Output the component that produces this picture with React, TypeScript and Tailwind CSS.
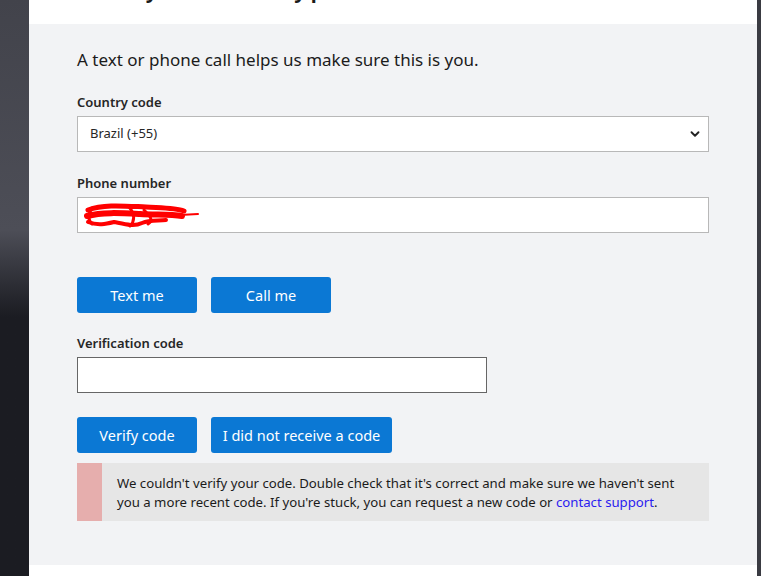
import { ChevronDown } from "lucide-react";

const font = { fontFamily: '"Noto Sans", "Open Sans", sans-serif' };

function Scribble() {
  return (
    <svg width="116" height="26" viewBox="0 0 116 26" className="block">
      <g fill="none" stroke="#ff0000" strokeLinecap="round" strokeLinejoin="round">
        <path d="M4 8 C20 2 40 4 62 5 C78 6 92 6 100 9" strokeWidth="5" />
        <path d="M3 14 C18 10 36 11 56 12 C72 13 86 12 98 14" strokeWidth="6" />
        <path d="M4 20 C14 24 22 22 30 20 C40 22 50 25 58 21 C66 18 74 19 82 18" strokeWidth="4" />
        <path d="M8 6 C4 12 4 18 8 22" strokeWidth="3" />
        <path d="M44 4 C50 10 52 18 46 24" strokeWidth="3" />
        <path d="M96 13 L114 12" strokeWidth="2" />
        <path d="M60 8 C66 14 70 18 64 22" strokeWidth="3" />
      </g>
    </svg>
  );
}

function Label({ children }: { children: React.ReactNode }) {
  return (
    <div className="text-[13px] font-semibold leading-[18px] text-[#262626] mb-[5px]">
      {children}
    </div>
  );
}

function BlueButton({ children, width }: { children: React.ReactNode; width: string }) {
  return (
    <button
      className={`${width} h-[36px] rounded-[3px] bg-[#0b78d4] text-white text-[14.5px] leading-none`}
    >
      {children}
    </button>
  );
}

export default function App() {
  return (
    <div className="flex h-[576px] w-[761px] overflow-hidden bg-[#1c1d23]" style={font}>
      <div className="w-[29px] h-full bg-gradient-to-b from-[#42434b] via-[#4d4e57] via-40% to-[#1b1c22] to-55%" />
      <div className="w-[728px] h-full bg-white flex flex-col">
        <div className="h-[24px] px-[48px] overflow-hidden">
          <h1 className="text-[20px] font-bold leading-[24px] text-[#1b1b1b] -mt-[21px]">
            Identity verification by phone
          </h1>
        </div>
        <div className="h-[541px] bg-[#f2f3f5] px-[48px] pt-[24px]">
          <p className="text-[17px] leading-[24px] text-[#1b1b1b] mb-[21px]">
            A text or phone call helps us make sure this is you.
          </p>

          <Label>Country code</Label>
          <div className="w-[632px] h-[36px] bg-white border border-[#b8b8b8] flex items-center justify-between pl-[12px] pr-[6px]">
            <span className="text-[13px] text-[#262626]">Brazil (+55)</span>
            <ChevronDown size={14} strokeWidth={3.2} className="text-[#222]" />
          </div>

          <div className="mt-[22px]">
            <Label>Phone number</Label>
            <div className="w-[632px] h-[36px] bg-white border border-[#b8b8b8] flex items-center pl-[6px]">
              <Scribble />
            </div>
          </div>

          <div className="flex gap-[14px] mt-[44px]">
            <BlueButton width="w-[120px]">Text me</BlueButton>
            <BlueButton width="w-[120px]">Call me</BlueButton>
          </div>

          <div className="mt-[21px]">
            <Label>Verification code</Label>
            <div className="w-[410px] h-[36px] bg-white border border-[#666666]" />
          </div>

          <div className="flex gap-[14px] mt-[24px]">
            <BlueButton width="w-[120px]">Verify code</BlueButton>
            <BlueButton width="w-[181px]">I did not receive a code</BlueButton>
          </div>

          <div className="mt-[10px] w-[632px] flex bg-[#e6e6e6]">
            <div className="w-[25px] shrink-0 bg-[#e6aead]" />
            <p className="pl-[15px] pr-[20px] pt-[11px] pb-[9px] text-[13.2px] leading-[19px] text-[#1b1b1b]">
              We couldn't verify your code. Double check that it's correct and make sure we haven't sent
              you a more recent code. If you're stuck, you can request a new code or{" "}
              <a className="text-[#2a20f0]">contact support</a>.
            </p>
          </div>
        </div>
        <div className="flex-1 bg-white" />
      </div>
      <div className="flex-1 h-full bg-[#3a3b42]" />
    </div>
  );
}
